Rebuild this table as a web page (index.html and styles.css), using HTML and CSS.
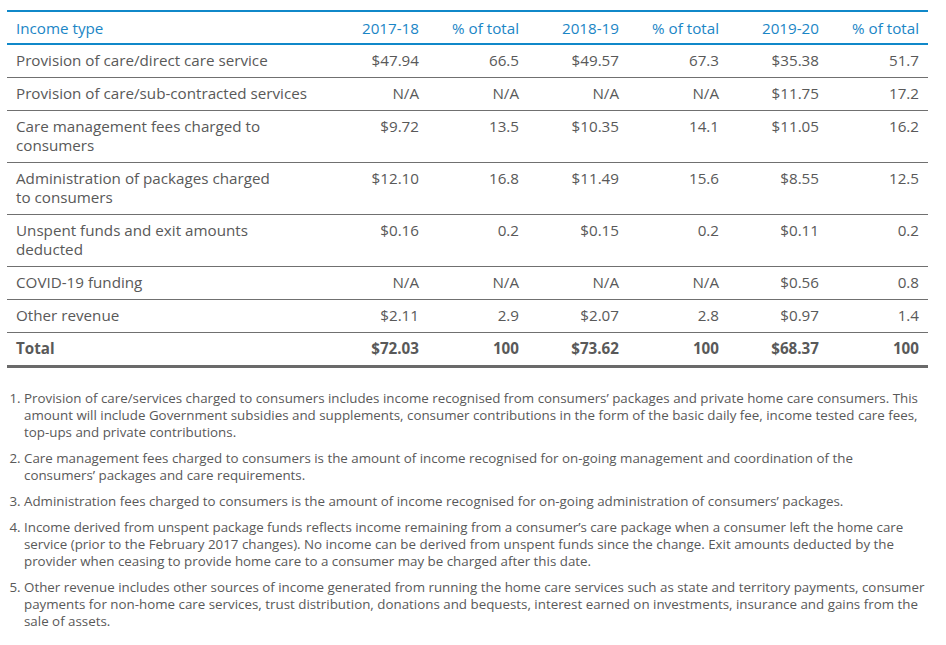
FILE: index.html
```html
<!DOCTYPE html>
<html lang="en">
<head>
<meta charset="utf-8">
<title>Income type</title>
<link rel="stylesheet" href="styles.css">
</head>
<body>
<div class="page">
<table class="data">
  <colgroup>
    <col class="c-label"><col class="c-num"><col class="c-num"><col class="c-num"><col class="c-num"><col class="c-num"><col class="c-num">
  </colgroup>
  <thead>
    <tr>
      <th class="label">Income type</th>
      <th>2017-18</th><th>% of total</th><th>2018-19</th><th>% of total</th><th>2019-20</th><th>% of total</th>
    </tr>
  </thead>
  <tbody>
    <tr><td class="label">Provision of care/direct care service</td><td>$47.94</td><td>66.5</td><td>$49.57</td><td>67.3</td><td>$35.38</td><td>51.7</td></tr>
    <tr><td class="label">Provision of care/sub-contracted services</td><td>N/A</td><td>N/A</td><td>N/A</td><td>N/A</td><td>$11.75</td><td>17.2</td></tr>
    <tr><td class="label"><span class="wrap">Care management fees charged to consumers</span></td><td>$9.72</td><td>13.5</td><td>$10.35</td><td>14.1</td><td>$11.05</td><td>16.2</td></tr>
    <tr><td class="label"><span class="wrap">Administration of packages charged to consumers</span></td><td>$12.10</td><td>16.8</td><td>$11.49</td><td>15.6</td><td>$8.55</td><td>12.5</td></tr>
    <tr><td class="label"><span class="wrap">Unspent funds and exit amounts deducted</span></td><td>$0.16</td><td>0.2</td><td>$0.15</td><td>0.2</td><td>$0.11</td><td>0.2</td></tr>
    <tr><td class="label">COVID-19 funding</td><td>N/A</td><td>N/A</td><td>N/A</td><td>N/A</td><td>$0.56</td><td>0.8</td></tr>
    <tr><td class="label">Other revenue</td><td>$2.11</td><td>2.9</td><td>$2.07</td><td>2.8</td><td>$0.97</td><td>1.4</td></tr>
    <tr class="total"><td class="label">Total</td><td>$72.03</td><td>100</td><td>$73.62</td><td>100</td><td>$68.37</td><td>100</td></tr>
  </tbody>
</table>
<ol class="notes">
  <li>Provision of care/services charged to consumers includes income recognised from consumers’ packages and private home care consumers. This amount will include Government subsidies and supplements, consumer contributions in the form of the basic daily fee, income tested care fees, top-ups and private contributions.</li>
  <li>Care management fees charged to consumers is the amount of income recognised for on-going management and coordination of the consumers’ packages and care requirements.</li>
  <li>Administration fees charged to consumers is the amount of income recognised for on-going administration of consumers’ packages.</li>
  <li>Income derived from unspent package funds reflects income remaining from a consumer’s care package when a consumer left the home care service (prior to the February 2017 changes). No income can be derived from unspent funds since the change. Exit amounts deducted by the provider when ceasing to provide home care to a consumer may be charged after this date.</li>
  <li>Other revenue includes other sources of income generated from running the home care services such as state and territory payments, consumer payments for non-home care services, trust distribution, donations and bequests, interest earned on investments, insurance and gains from the sale of assets.</li>
</ol>
</div>
</body>
</html>
```
FILE: styles.css
```css
html, body {
  margin: 0;
  padding: 0;
  background: #ffffff;
}
body {
  font-family: "Open Sans", "Liberation Sans", sans-serif;
  color: #595959;
}
.page {
  padding: 10px 18px 0 7px;
}
.data {
  width: 921px;
  border-collapse: collapse;
  font-size: 15.2px;
  line-height: 19px;
  table-layout: fixed;
}
.c-label { width: 321px; }
.c-num { width: 100px; }
.data thead tr {
  border-top: 2px solid #1088c9;
  border-bottom: 2px solid #1088c9;
}
.data th {
  color: #1b86c6;
  font-weight: 400;
  text-align: right;
  padding: 7px 9px 5px 9px;
}
.data th.label { text-align: left; }
.data td {
  text-align: right;
  padding: 6px 9px 7px 9px;
  border-bottom: 1px solid #707070;
  vertical-align: top;
}
.data td.label { text-align: left; }
.wrap {
  display: block;
  max-width: 262px;
}
.data tr.total td {
  font-weight: 700;
  border-bottom: 3px solid #6a6a6a;
}
.notes {
  margin: 22px 0 0 0;
  padding: 0 0 0 17px;
  font-size: 13.35px;
  line-height: 17px;
  width: 901px;
}
.notes li {
  margin-bottom: 9px;
  padding-left: 0;
}
```
